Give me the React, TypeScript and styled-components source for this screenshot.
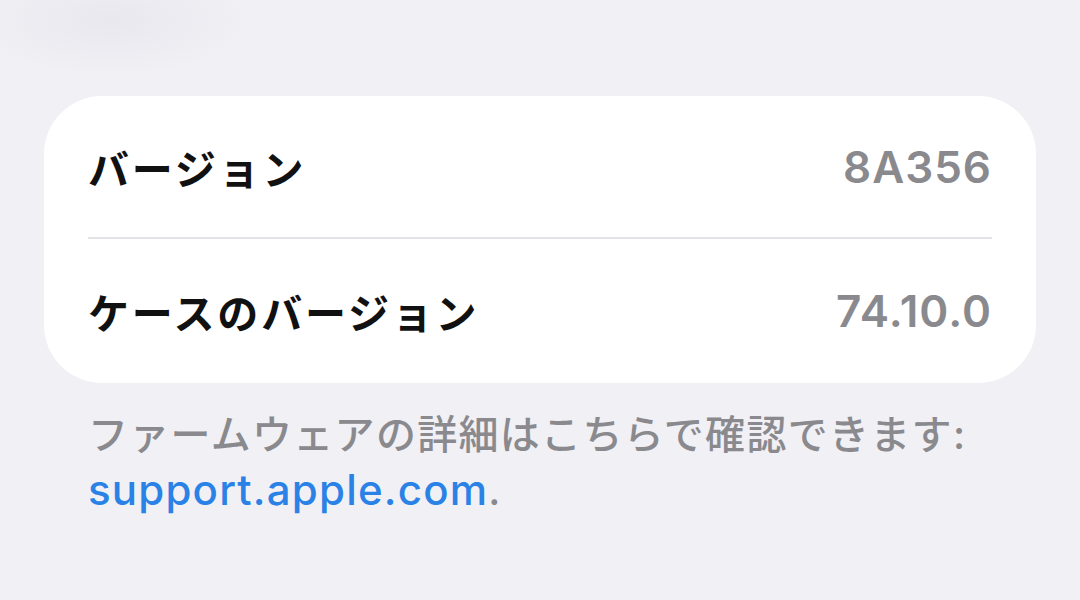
import React from "react";
import styled, { createGlobalStyle } from "styled-components";

const GlobalStyle = createGlobalStyle`
  html, body {
    margin: 0;
    padding: 0;
    height: 100%;
  }
  body {
    background: #f1f0f5;
    font-family: "Inter", "Noto Sans CJK JP", sans-serif;
    -webkit-font-smoothing: antialiased;
  }
`;

const Page = styled.div`
  width: 1080px;
  height: 600px;
  box-sizing: border-box;
  padding: 96px 44px 0;
  background:
    radial-gradient(ellipse 180px 70px at 110px 20px, rgba(226, 225, 233, 0.55), rgba(241, 240, 245, 0) 80%),
    #f1f0f5;
  overflow: hidden;
`;

const Card = styled.div`
  background: #ffffff;
  border-radius: 58px;
  padding: 0 44px;
`;

const Row = styled.div<{ $height: number }>`
  display: flex;
  align-items: center;
  justify-content: space-between;
  height: ${(p) => p.$height}px;
`;

const Divider = styled.div`
  height: 2px;
  background: #e3e3e7;
`;

const Label = styled.span`
  font-size: 41px;
  font-weight: 700;
  color: #111111;
  letter-spacing: 2.8px;
`;

const Value = styled.span`
  font-size: 44px;
  font-weight: 600;
  color: #8a8a8e;
  letter-spacing: 1px;
`;

const Footer = styled.div`
  margin-top: 24px;
  padding: 0 44px;
  font-size: 40px;
  font-weight: 500;
  line-height: 55px;
  color: #8a8a8e;
  letter-spacing: 1.3px;
`;

const Link = styled.span`
  color: #2b82e6;
  font-size: 42px;
  letter-spacing: 1.2px;
`;

export default function App() {
  return (
    <>
      <GlobalStyle />
      <Page>
        <Card>
          <Row $height={141}>
            <Label>バージョン</Label>
            <Value>8A356</Value>
          </Row>
          <Divider />
          <Row $height={144}>
            <Label>ケースのバージョン</Label>
            <Value>74.10.0</Value>
          </Row>
        </Card>
        <Footer>
          ファームウェアの詳細はこちらで確認できます:
          <br />
          <Link>support.apple.com</Link>.
        </Footer>
      </Page>
    </>
  );
}
